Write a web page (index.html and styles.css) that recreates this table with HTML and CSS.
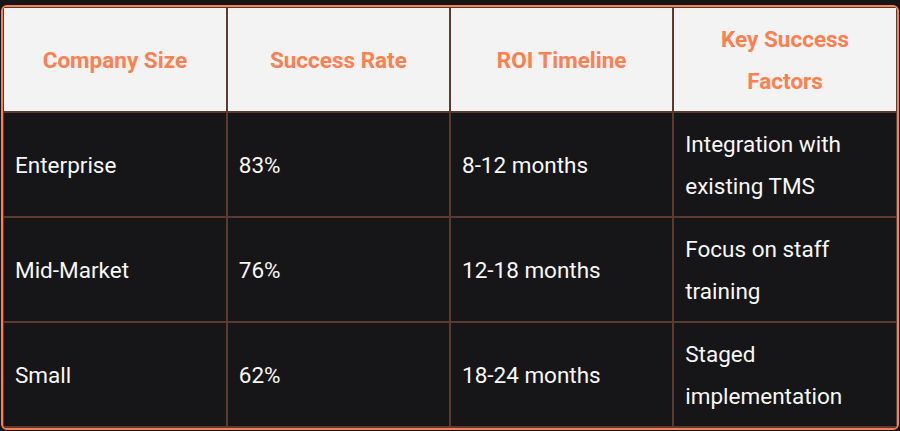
FILE: index.html
```html
<!DOCTYPE html>
<html lang="en">
<head>
<meta charset="utf-8">
<link rel="stylesheet" href="styles.css">
</head>
<body>
<div class="wrap">
<table class="tbl">
<thead>
<tr><th>Company Size</th><th>Success Rate</th><th>ROI Timeline</th><th>Key Success Factors</th></tr>
</thead>
<tbody>
<tr><td>Enterprise</td><td>83%</td><td>8-12 months</td><td>Integration with existing TMS</td></tr>
<tr><td>Mid-Market</td><td>76%</td><td>12-18 months</td><td>Focus on staff training</td></tr>
<tr><td>Small</td><td>62%</td><td>18-24 months</td><td>Staged implementation</td></tr>
</tbody>
</table>
</div>
</body>
</html>
```
FILE: styles.css
```css
html, body {
  margin: 0;
  padding: 0;
  background: #161618;
}
body {
  padding: 5px 1px 0 1px;
  font-family: Roboto, "Liberation Sans", sans-serif;
}
.wrap {
  border: 2px solid #ff7f50;
  border-radius: 6px;
  overflow: hidden;
  background: #161618;
}
.tbl {
  width: 100%;
  border-collapse: collapse;
  table-layout: fixed;
  font-size: 22.5px;
  line-height: 42px;
}
.tbl th, .tbl td {
  border: 2px solid #5c3a2e;
  padding: 9.5px 11px;
  vertical-align: middle;
}
.tbl tr > :first-child { border-left: 1px solid #5c3a2e; }
.tbl tr > :last-child { border-right: 1px solid #5c3a2e; }
.tbl thead th { border-top: 1px solid #5c3a2e; }
.tbl tbody tr:last-child td { border-bottom: 2px solid #5c3a2e; }
.tbl th {
  background: #f3f3f3;
  color: #ff7f50;
  font-weight: 700;
  text-align: center;
}
.tbl td {
  color: #f7f7f7;
  text-align: left;
}
```
